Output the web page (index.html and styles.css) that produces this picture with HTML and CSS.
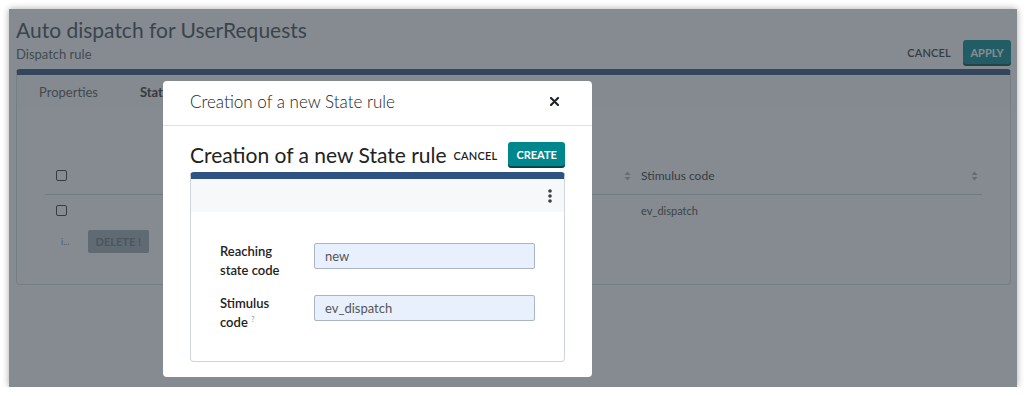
FILE: index.html
```html
<!DOCTYPE html>
<html>
<head>
<meta charset="utf-8">
<link rel="stylesheet" href="styles.css">
</head>
<body>
<div class="frame">
  <div class="page">
    <div class="head">
      <div class="titles">
        <h1 class="title">Auto dispatch for UserRequests</h1>
        <div class="subtitle">Dispatch rule</div>
      </div>
      <div class="actions">
        <span class="link-btn">CANCEL</span>
        <span class="btn btn-teal btn-apply">APPLY</span>
      </div>
    </div>
    <div class="card">
      <div class="tabs">
        <span class="tab">Properties</span>
        <span class="tab tab-active">State rules</span>
      </div>
      <div class="toolbar-space"></div>
      <div class="table">
        <div class="trow thead">
          <div class="cell c-check"><span class="checkbox"></span></div>
          <div class="cell c-col1">Reaching state code
            <svg class="sort" width="7" height="10" viewBox="0 0 7 10"><path d="M0.5 4 L3.5 0.5 L6.5 4 Z M0.5 6 L3.5 9.5 L6.5 6 Z" fill="#aab2ba"/></svg>
          </div>
          <div class="cell c-col2">Stimulus code
            <svg class="sort" width="7" height="10" viewBox="0 0 7 10"><path d="M0.5 4 L3.5 0.5 L6.5 4 Z M0.5 6 L3.5 9.5 L6.5 6 Z" fill="#aab2ba"/></svg>
          </div>
        </div>
        <div class="trow tbody">
          <div class="cell c-check"><span class="checkbox"></span></div>
          <div class="cell c-col1">new</div>
          <div class="cell c-col2">ev_dispatch</div>
        </div>
        <div class="row-actions">
          <span class="tree">i...</span>
          <span class="btn btn-grey">DELETE !</span>
        </div>
      </div>
    </div>
  </div>

  <div class="overlay"></div>

  <div class="modal">
    <div class="modal-head">
      <span class="modal-title">Creation of a new State rule</span>
      <svg class="close" width="9" height="9" viewBox="0 0 9 9"><path d="M1 1 L8 8 M8 1 L1 8" stroke="#1d2125" stroke-width="2.1" stroke-linecap="round"/></svg>
    </div>
    <div class="modal-body">
      <div class="mb-head">
        <h2 class="mb-title">Creation of a new State rule</h2>
        <span class="link-btn link-dark">CANCEL</span>
        <span class="btn btn-teal btn-create">CREATE</span>
      </div>
      <div class="inner-card">
        <div class="inner-toolbar">
          <svg width="4" height="14" viewBox="0 0 4 14"><circle cx="2" cy="2" r="1.8" fill="#3a3f44"/><circle cx="2" cy="7" r="1.8" fill="#3a3f44"/><circle cx="2" cy="12" r="1.8" fill="#3a3f44"/></svg>
        </div>
        <div class="form">
          <div class="frow">
            <label class="flabel">Reaching<br>state code</label>
            <div class="finput">new</div>
          </div>
          <div class="frow">
            <label class="flabel">Stimulus<br>code <span class="help">?</span></label>
            <div class="finput">ev_dispatch</div>
          </div>
        </div>
      </div>
    </div>
  </div>
</div>
</body>
</html>
```
FILE: styles.css
```css
* { box-sizing: border-box; }
html, body { margin: 0; padding: 0; background: #ffffff; }
body { font-family: "Lato", "Open Sans", sans-serif; color: #444; }

.frame {
  position: relative;
  margin: 9px 0 0 9px;
  width: 1008px;
  height: 378px;
  overflow: hidden;
  background: #ffffff;
  box-shadow: 0 0 7px rgba(0,0,0,0.35);
}

.page { padding: 8px 6px 0 7px; }

.head { display: flex; justify-content: space-between; align-items: flex-end; }
.title { margin: 0; font-size: 21px; line-height: 26px; font-weight: 400; color: #404850; white-space: nowrap; }
.subtitle { margin-top: 2px; font-size: 13px; line-height: 18px; color: #505860; }
.actions { display: flex; align-items: center; gap: 12px; margin-bottom: -1px; }
.link-btn { font-size: 11px; font-weight: 600; letter-spacing: 0.2px; color: #333; }
.btn { display: inline-flex; align-items: center; justify-content: center; height: 24px; padding: 0 9px; border-radius: 3px; font-size: 11px; font-weight: 700; }
.btn-teal { background: #00878d; color: #fff; box-shadow: 0 2px 0 #00474b; }
.btn-apply { width: 48px; padding: 0; }

.card {
  margin-top: 6px;
  height: 216px;
  border: 1px solid #d9dde2;
  border-top: 6px solid #2c4f7a;
  border-radius: 4px;
}
.tabs { display: flex; gap: 42px; padding: 8px 22px; height: 34px; background: #fbfbfc; }
.tab { font-size: 13px; line-height: 18px; color: #555; }
.tab-active { font-weight: 700; color: #333; }
.toolbar-space { height: 48px; }

.table { margin: 0 28px; }
.trow { display: flex; align-items: center; }
.thead { height: 38px; border-bottom: 1px solid #cfd4d9; font-size: 12px; color: #333; }
.tbody { height: 30px; font-size: 11px; color: #444; }
.cell { display: flex; align-items: center; }
.c-check { width: 150px; padding-left: 11px; }
.c-col1 { width: 446px; justify-content: space-between; padding-right: 10px; }
.c-col2 { flex: 1; justify-content: space-between; padding-right: 4px; }
.checkbox { display: inline-block; width: 11px; height: 11px; border: 1.3px solid #333; border-radius: 2px; background: #fff; }
.row-actions { display: flex; align-items: center; gap: 18px; padding-left: 16px; height: 33px; }
.tree { font-size: 9px; color: #888; }
.btn-grey { background: #9ea9b3; color: #6b7680; height: 23px; padding: 0 8px; border-radius: 2px; font-weight: 700; font-size: 11px; }

.overlay { position: absolute; inset: 0; background: rgba(55,65,73,0.61); }

.modal {
  position: absolute;
  left: 154px;
  top: 72px;
  width: 429px;
  height: 296px;
  background: #fff;
  border-radius: 4px;
  display: flex;
  flex-direction: column;
}
.modal-head {
  display: flex; align-items: center; justify-content: space-between;
  height: 45px; padding: 0 33px 4px 27px;
  border-bottom: 1px solid #dee2e6;
}
.modal-title { font-size: 17px; font-weight: 300; color: #222; }
.modal-body { padding: 15px 27px 15px 27px; flex: 1; display: flex; flex-direction: column; }
.mb-head { display: flex; align-items: center; gap: 0; height: 28px; margin-bottom: 3px; }
.mb-title { margin: 0; font-size: 21px; line-height: 26px; font-weight: 400; color: #222; white-space: nowrap; }
.link-dark { margin-left: 7px; color: #222; }
.btn-create { margin-left: 11px; height: 24px; padding: 0 8px; margin-top: -2px; }

.inner-card {
  flex: 1;
  border: 1px solid #cfd5dd;
  border-top: 7px solid #2e5282;
  border-radius: 4px;
}
.inner-toolbar { height: 33px; background: #f7f8fa; display: flex; align-items: center; justify-content: flex-end; padding-right: 12px; }
.form { padding: 31px 29px 0 29px; display: flex; flex-direction: column; gap: 15px; }
.frow { display: flex; align-items: flex-start; }
.flabel { width: 94px; font-size: 13px; line-height: 19px; font-weight: 600; color: #222; margin-top: -1px; }
.help { font-size: 8px; line-height: 0; color: #999; font-weight: 400; vertical-align: 5px; }
.finput {
  width: 221px; height: 26px;
  background: #e8f0fe;
  border: 1px solid #a9b5c3;
  border-radius: 2px;
  padding-left: 10px;
  display: flex; align-items: center;
  font-size: 13px; color: #555;
}
```
